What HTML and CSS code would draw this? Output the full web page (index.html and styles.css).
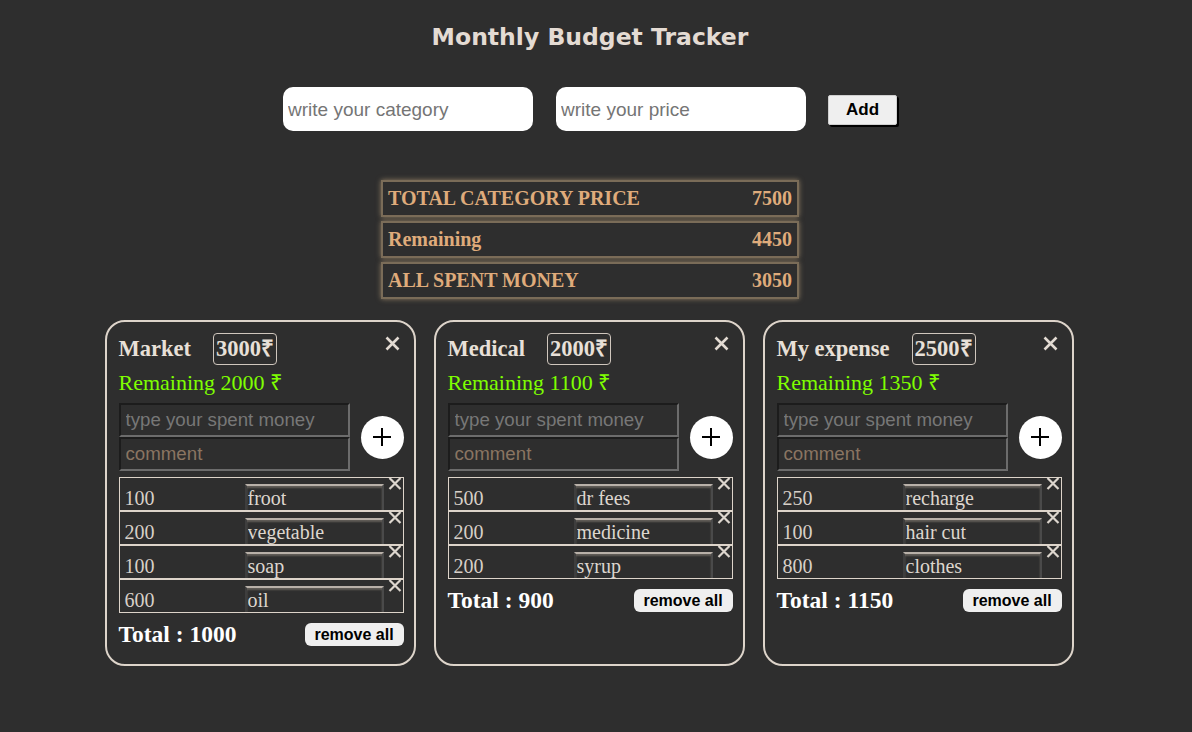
FILE: index.html
```html
<!DOCTYPE html>
<html>
<head>
<meta charset="utf-8">
<title>Monthly Budget Tracker</title>
<link rel="stylesheet" href="styles.css">
</head>
<body>
<div class="page">
  <h1 class="title">Monthly Budget Tracker</h1>
  <div class="form">
    <input class="main-input" placeholder="write your category">
    <input class="main-input" placeholder="write your price">
    <button class="add-btn">Add</button>
  </div>

  <div class="summary">
    <div class="sum-row"><span>TOTAL CATEGORY PRICE</span><span>7500</span></div>
    <div class="sum-row"><span>Remaining</span><span>4450</span></div>
    <div class="sum-row"><span>ALL SPENT MONEY</span><span>3050</span></div>
  </div>

  <div class="cards">
    <div class="card">
      <div class="card-head"><span class="card-name">Market</span><span class="card-price">3000₹</span></div>
      <svg class="card-close" width="15" height="15" viewBox="0 0 15 15"><path d="M1.5 1.5L13.5 13.5M13.5 1.5L1.5 13.5"/></svg>
      <div class="remaining">Remaining 2000 ₹</div>
      <div class="entry">
        <div class="entry-fields">
          <input class="field spent" placeholder="type your spent money">
          <input class="field comment" placeholder="comment">
        </div>
        <button class="plus"><svg width="20" height="20" viewBox="0 0 20 20"><path d="M10 1V19M1 10H19"/></svg></button>
      </div>
      <div class="list">
        <div class="item"><span class="amt">100</span><input class="note" value="froot"><svg class="item-x" width="14" height="13" viewBox="0 0 14 13"><path d="M1.5 1L12.5 12M12.5 1L1.5 12"/></svg></div>
        <div class="item"><span class="amt">200</span><input class="note" value="vegetable"><svg class="item-x" width="14" height="13" viewBox="0 0 14 13"><path d="M1.5 1L12.5 12M12.5 1L1.5 12"/></svg></div>
        <div class="item"><span class="amt">100</span><input class="note" value="soap"><svg class="item-x" width="14" height="13" viewBox="0 0 14 13"><path d="M1.5 1L12.5 12M12.5 1L1.5 12"/></svg></div>
        <div class="item"><span class="amt">600</span><input class="note" value="oil"><svg class="item-x" width="14" height="13" viewBox="0 0 14 13"><path d="M1.5 1L12.5 12M12.5 1L1.5 12"/></svg></div>
      </div>
      <div class="total-row"><span class="total">Total : 1000</span><button class="remove">remove all</button></div>
    </div>

    <div class="card">
      <div class="card-head"><span class="card-name">Medical</span><span class="card-price">2000₹</span></div>
      <svg class="card-close" width="15" height="15" viewBox="0 0 15 15"><path d="M1.5 1.5L13.5 13.5M13.5 1.5L1.5 13.5"/></svg>
      <div class="remaining">Remaining 1100 ₹</div>
      <div class="entry">
        <div class="entry-fields">
          <input class="field spent" placeholder="type your spent money">
          <input class="field comment" placeholder="comment">
        </div>
        <button class="plus"><svg width="20" height="20" viewBox="0 0 20 20"><path d="M10 1V19M1 10H19"/></svg></button>
      </div>
      <div class="list">
        <div class="item"><span class="amt">500</span><input class="note" value="dr fees"><svg class="item-x" width="14" height="13" viewBox="0 0 14 13"><path d="M1.5 1L12.5 12M12.5 1L1.5 12"/></svg></div>
        <div class="item"><span class="amt">200</span><input class="note" value="medicine"><svg class="item-x" width="14" height="13" viewBox="0 0 14 13"><path d="M1.5 1L12.5 12M12.5 1L1.5 12"/></svg></div>
        <div class="item"><span class="amt">200</span><input class="note" value="syrup"><svg class="item-x" width="14" height="13" viewBox="0 0 14 13"><path d="M1.5 1L12.5 12M12.5 1L1.5 12"/></svg></div>
      </div>
      <div class="total-row"><span class="total">Total : 900</span><button class="remove">remove all</button></div>
    </div>

    <div class="card">
      <div class="card-head"><span class="card-name">My expense</span><span class="card-price">2500₹</span></div>
      <svg class="card-close" width="15" height="15" viewBox="0 0 15 15"><path d="M1.5 1.5L13.5 13.5M13.5 1.5L1.5 13.5"/></svg>
      <div class="remaining">Remaining 1350 ₹</div>
      <div class="entry">
        <div class="entry-fields">
          <input class="field spent" placeholder="type your spent money">
          <input class="field comment" placeholder="comment" autofocus>
        </div>
        <button class="plus"><svg width="20" height="20" viewBox="0 0 20 20"><path d="M10 1V19M1 10H19"/></svg></button>
      </div>
      <div class="list">
        <div class="item"><span class="amt">250</span><input class="note" value="recharge"><svg class="item-x" width="14" height="13" viewBox="0 0 14 13"><path d="M1.5 1L12.5 12M12.5 1L1.5 12"/></svg></div>
        <div class="item"><span class="amt">100</span><input class="note" value="hair cut"><svg class="item-x" width="14" height="13" viewBox="0 0 14 13"><path d="M1.5 1L12.5 12M12.5 1L1.5 12"/></svg></div>
        <div class="item"><span class="amt">800</span><input class="note" value="clothes"><svg class="item-x" width="14" height="13" viewBox="0 0 14 13"><path d="M1.5 1L12.5 12M12.5 1L1.5 12"/></svg></div>
      </div>
      <div class="total-row"><span class="total">Total : 1150</span><button class="remove">remove all</button></div>
    </div>
  </div>
</div>
</body>
</html>
```

FILE: styles.css
```css
* { box-sizing: border-box; }

body {
  margin: 0;
  background: #2e2e2e;
  font-family: "Liberation Serif", "Times New Roman", serif;
}

.page {
  padding-right: 12px;
}

.title {
  margin: 0;
  padding-top: 20px;
  height: 54px;
  line-height: 34px;
  text-align: center;
  font-family: "DejaVu Sans", sans-serif;
  font-weight: bold;
  font-size: 23.5px;
  color: #e4dbd3;
}

.form {
  display: flex;
  justify-content: center;
  align-items: center;
  margin-top: 33px;
}

.main-input {
  width: 250px;
  height: 44px;
  border: none;
  border-radius: 10px;
  padding: 2px 5px 0;
  background: #ffffff;
  font-family: "Liberation Sans", Arial, sans-serif;
  font-size: 19px;
  color: #222;
  outline: none;
}
.main-input + .main-input { margin-left: 23px; }
.main-input::placeholder { color: #757575; }

.add-btn {
  margin-left: 22px;
  width: 69px;
  height: 30px;
  margin-top: 1px;
  background: #efefef;
  border: 1px solid #cfcfcf;
  border-radius: 2px;
  box-shadow: 2px 2px 0 #000;
  font-family: "Liberation Sans", Arial, sans-serif;
  font-weight: bold;
  font-size: 17px;
  color: #000;
  padding: 0;
}

.summary {
  margin: 49px auto 0;
  width: 418px;
  display: flex;
  flex-direction: column;
  gap: 4px;
}

.sum-row {
  height: 37px;
  border: 2px solid #7a6c58;
  box-shadow: 0 0 5px #8e7c62;
  display: flex;
  justify-content: space-between;
  align-items: center;
  padding: 0 5px;
  font-weight: bold;
  font-size: 20px;
  color: #dfab7b;
}

.cards {
  display: flex;
  justify-content: center;
  gap: 18px;
  margin-top: 21px;
  padding-right: 2px;
}

.card {
  position: relative;
  width: 311px;
  border: 2px solid #ddd4ca;
  border-radius: 20px;
  padding: 11px 10px 16px 12px;
}

.card-head {
  display: flex;
  align-items: center;
  height: 32px;
}

.card-name {
  font-weight: bold;
  font-size: 22.5px;
  color: #e8e0d8;
}

.card-price {
  margin-left: 22px;
  height: 32px;
  line-height: 30px;
  border: 1px solid #cfc6bd;
  border-radius: 4px;
  padding: 0 2px;
  font-weight: bold;
  font-size: 22.5px;
  color: #e8e0d8;
}

.card-close {
  position: absolute;
  top: 14px;
  right: 14px;
  fill: none;
  stroke: #e2dad2;
  stroke-width: 2.6;
}

.remaining {
  margin-top: 5px;
  font-size: 22px;
  line-height: 26px;
  color: #7fff00;
}

.entry {
  margin-top: 7px;
  display: flex;
  align-items: center;
  gap: 11px;
}

.entry-fields {
  display: flex;
  flex-direction: column;
}

.field {
  width: 231px;
  height: 34px;
  border: 2px solid;
  border-color: #1c1c1c #6c6c6c #6c6c6c #1c1c1c;
  background: #2e2e2e;
  padding: 0 5px;
  font-family: "Liberation Sans", Arial, sans-serif;
  font-size: 18.7px;
  color: #ddd;
  outline: none;
  caret-color: #d8c8a8;
}
.spent::placeholder { color: #777777; }
.comment::placeholder { color: #8a7562; }

.plus {
  width: 43px;
  height: 43px;
  border: none;
  border-radius: 50%;
  background: #ffffff;
  padding: 0;
  display: flex;
  align-items: center;
  justify-content: center;
}
.plus svg {
  fill: none;
  stroke: #000;
  stroke-width: 2;
}

.list {
  margin-top: 6px;
  display: flex;
  flex-direction: column;
}

.item {
  position: relative;
  height: 34px;
  border: 1px solid #ddd4ca;
  display: flex;
  align-items: flex-end;
}

.amt {
  width: 125px;
  padding-left: 5px;
  font-size: 20px;
  line-height: 24px;
  color: #d8d0c8;
}

.note {
  width: 139px;
  height: 26px;
  background: transparent;
  border: 2px solid;
  border-color: #b8b0a8 #4a4a4a transparent #3e3e3e;
  border-bottom: none;
  padding: 0 1px;
  font-family: "Liberation Serif", "Times New Roman", serif;
  font-size: 20px;
  color: #ddd6ce;
  outline: none;
  box-shadow: inset 0 2px 2px rgba(160, 150, 140, 0.45);
}

.item-x {
  position: absolute;
  top: -1px;
  right: 1px;
  fill: none;
  stroke: #ddd6ce;
  stroke-width: 2.2;
}

.total-row {
  margin-top: 8px;
  display: flex;
  justify-content: space-between;
  align-items: center;
}

.total {
  font-weight: bold;
  font-size: 23.5px;
  color: #ffffff;
}

.remove {
  width: 99px;
  height: 23px;
  border: none;
  border-radius: 6px;
  background: #efefef;
  padding: 0;
  font-family: "Liberation Sans", Arial, sans-serif;
  font-weight: bold;
  font-size: 16px;
  color: #000;
}
```
